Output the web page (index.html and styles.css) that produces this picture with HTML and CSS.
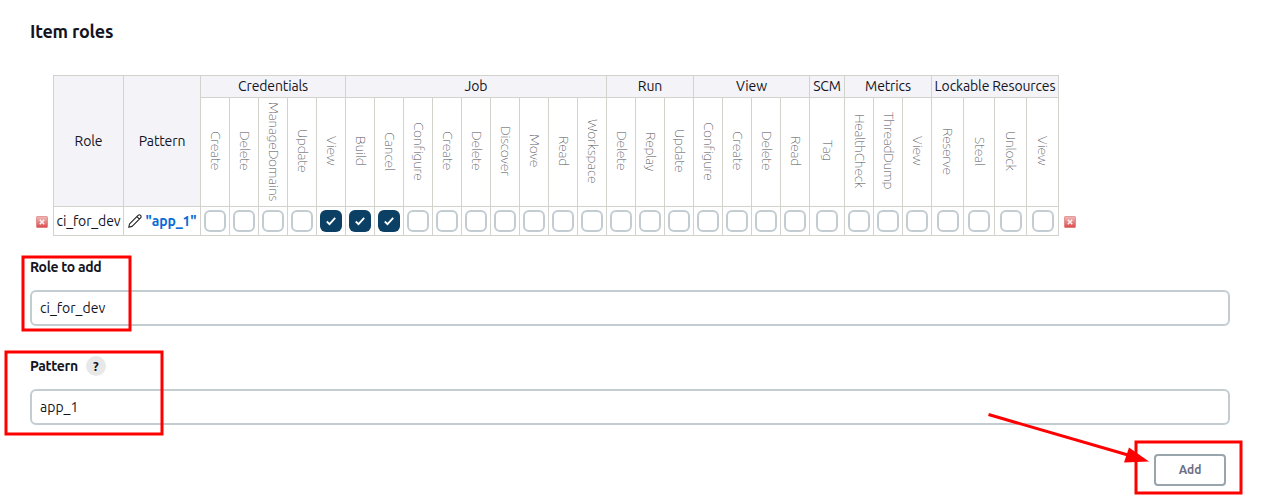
FILE: index.html
```html
<!DOCTYPE html>
<html lang="en">
<head>
<meta charset="utf-8">
<title>Item roles</title>
<link rel="stylesheet" href="styles.css">
</head>
<body>
<svg class="defs" width="0" height="0">
  <defs>
    <linearGradient id="red" x1="0" y1="0" x2="0" y2="1"><stop offset="0" stop-color="#f0bcba"/><stop offset="1" stop-color="#dc4a4c"/></linearGradient>
    <symbol id="remove" viewBox="0 0 12 12"><rect x=".5" y=".5" width="11" height="11" rx=".7" fill="url(#red)" stroke="#d66c6c" stroke-opacity=".6"/><path d="M3.8 3.800l4.400 4.400M8.200 3.800L3.800 8.200" stroke="#fff" stroke-opacity=".9" stroke-width="1.600"/></symbol>
  </defs>
</svg>
<main class="page">
  <h1 class="title">Item roles</h1>
  <section class="roles">
    <svg class="remove"><use href="#remove"/></svg>
    <div class="matrix" id="matrix">
      <div class="cell head tall">Role</div>
      <div class="cell head tall">Pattern</div>
    </div>
    <svg class="remove right"><use href="#remove"/></svg>
  </section>
  <label class="label" for="role">Role to add</label>
  <input class="field" id="role" value="ci_for_dev">
  <label class="label second" for="pattern">Pattern<span class="help">?</span></label>
  <input class="field" id="pattern" value="app_1">
  <div class="actions"><button class="add">Add</button></div>
</main>
<svg class="marks" viewBox="0 0 1272 501">
  <g fill="none" stroke="#f00" stroke-width="3">
    <rect x="23" y="257" width="107" height="73"/>
    <rect x="6" y="352" width="156" height="82"/>
    <rect x="1136" y="442" width="105" height="51"/>
    <path d="M988.500 414.500L1128 455"/>
  </g>
  <path d="M1129 447.500L1149 461.500L1124 462.500z" fill="#f00"/>
</svg>
<script src="matrix.js"></script>
</body>
</html>
```

FILE: matrix.js
```js
const groups = [
  ["Credentials", ["Create", "Delete", "ManageDomains", "Update", "View"]],
  ["Job", ["Build", "Cancel", "Configure", "Create", "Delete", "Discover", "Move", "Read", "Workspace"]],
  ["Run", ["Delete", "Replay", "Update"]],
  ["View", ["Configure", "Create", "Delete", "Read"]],
  ["SCM", ["Tag"]],
  ["Metrics", ["HealthCheck", "ThreadDump", "View"]],
  ["Lockable Resources", ["Reserve", "Steal", "Unlock", "View"]]
];
const checked = ["Credentials/View", "Job/Build", "Job/Cancel"];
const matrix = document.getElementById("matrix");
const add = html => matrix.insertAdjacentHTML("beforeend", html);

groups.forEach(([name, items]) => add(`<div class="cell head group span${items.length}">${name}</div>`));
groups.forEach(([, items]) => items.forEach(item => add(`<div class="cell perm"><span>${item}</span></div>`)));
add('<div class="cell">ci_for_dev</div>');
add('<div class="cell pattern"><svg class="pencil" viewBox="0 0 14 14"><path d="M.7 13.300L1.600 9.900L10.100 1.400a1.750 1.750 0 0 1 2.500 2.500L4.100 12.400zM8.900 2.600l2.500 2.500"/></svg><b>"app_1"</b></div>');
groups.forEach(([name, items]) => items.forEach(item => {
  const on = checked.includes(name + "/" + item);
  add(`<div class="cell"><span class="box${on ? " on" : ""}">${on ? '<svg viewBox="0 0 22 22"><path d="M6.800 11.500l2.700 2.700 5.700-6.400"/></svg>' : ""}</span></div>`);
}));
```

FILE: styles.css
```css
* { box-sizing: border-box; }
body { margin: 0; background: #fff; color: #14141f; font: 14px/20px "Ubuntu", "Noto Sans", sans-serif; overflow: hidden; }
.defs { position: absolute; }
.page { height: 501px; padding: 19px 42px 0 30px; display: flex; flex-direction: column; }
.title { margin: 0; font-size: 18px; line-height: 24px; height: 56px; font-weight: 600; letter-spacing: -.23px; }
.roles { display: flex; align-items: flex-end; height: 161px; margin-left: 6px; }
.remove { width: 12px; height: 12px; margin: 0 5px 8px 0; flex: none; }
.remove.right { margin-left: 5px; }
.matrix {
  display: grid; width: 1006px; flex: none; letter-spacing: -.13px;
  grid-template-columns: 70px 77px repeat(21, 29px) 35px repeat(3, 29px) 32px 31px 32px 32px;
  grid-template-rows: 22px 109px 29px;
  border-left: 1px solid #d3d3cd; border-top: 1px solid #d3d3cd;
}
.cell { display: flex; align-items: center; justify-content: center; min-width: 0; white-space: nowrap; border-right: 1px solid #d3d3cd; border-bottom: 1px solid #d3d3cd; }
.head { background: #f3f3f8; }
.group { padding-bottom: 2px; }
.tall { grid-row: span 2; }
.span3 { grid-column: span 3; }
.span4 { grid-column: span 4; }
.span5 { grid-column: span 5; }
.span9 { grid-column: span 9; }
.perm { color: #4c4c55; font-weight: 100; padding: 0 0 2px 1px; letter-spacing: -.25px; }
.perm span { writing-mode: vertical-rl; }
.pattern { color: #0b6bd6; gap: 4px; }
.pencil { width: 14px; height: 14px; fill: none; stroke: #222; stroke-width: 1.1; stroke-linejoin: round; }
.box { width: 22px; height: 22px; border: 2px solid #c3cdd1; border-radius: 6px; background: #fff; }
.box.on { border: 0; background: #0b3f63; }
.box svg { display: block; width: 22px; height: 22px; fill: none; stroke: #fff; stroke-width: 1.8; }
.label { height: 20px; margin-top: 21px; display: flex; align-items: center; font-weight: 600; letter-spacing: -.33px; }
.field { width: 1200px; height: 36px; margin: 13px 0 0; padding: 0 8px; border: 2px solid #c3cdd1; border-radius: 6px; background: #fff; color: #14141f; font: inherit; outline: 0; }
.label.second { margin-top: 30px; }
.help { width: 20px; height: 20px; margin-left: 8px; border-radius: 50%; background: #e8e8e8; text-align: center; font-size: 13px; font-weight: 600; letter-spacing: 0; }
.actions { display: flex; justify-content: flex-end; padding: 29px 4px 0 0; }
.add { width: 72px; height: 32px; padding: 0; border: 2px solid #98a5ad; border-radius: 4px; background: #fff; color: #6f6f84; font: 700 12px/20px "Ubuntu", "Noto Sans", sans-serif; }
.marks { position: absolute; left: 0; top: 0; width: 1272px; height: 501px; pointer-events: none; }
```
